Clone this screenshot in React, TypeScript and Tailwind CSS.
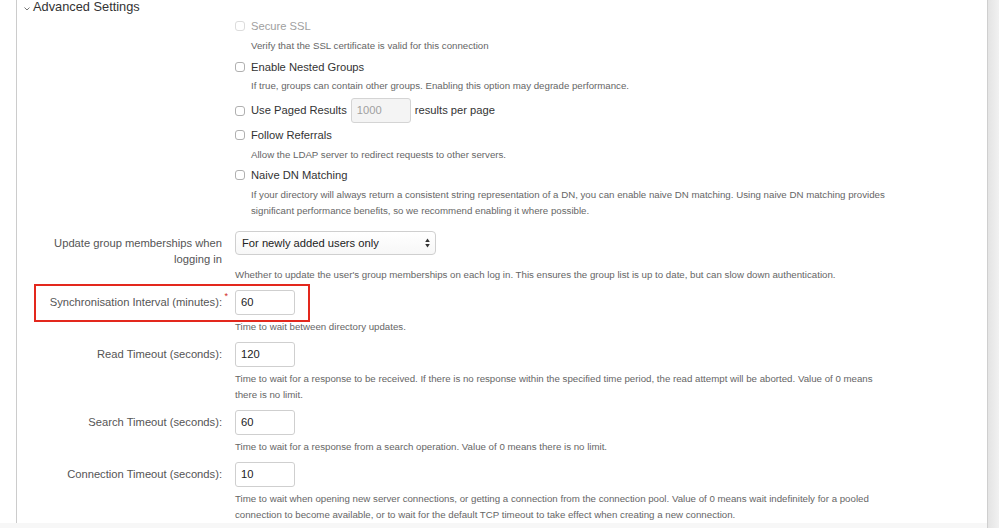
import type { ReactNode } from 'react'

const font = { fontFamily: '"Liberation Sans", Arial, sans-serif' }

function Checkbox({ disabled }: { disabled?: boolean }) {
  return (
    <span
      className={`inline-block w-[10px] h-[10px] rounded-[3px] border bg-white shrink-0 ${
        disabled ? 'border-[#dcdcdc]' : 'border-[#b0b0b0]'
      }`}
    />
  )
}

function Desc({ children, className = '' }: { children: ReactNode; className?: string }) {
  return <p className={`text-[9.7px] leading-[16px] text-[#666] whitespace-nowrap ${className}`}>{children}</p>
}

function TextBox({ value }: { value: string }) {
  return (
    <div className="w-[60px] h-[25px] border border-[#cfcfcf] rounded-[3px] bg-white flex items-center px-[5px] text-[11.2px] text-[#222]">
      {value}
    </div>
  )
}

function FieldRow({
  label,
  value,
  desc,
  required,
  className = '',
}: {
  label: string
  value: string
  desc: ReactNode
  required?: boolean
  className?: string
}) {
  return (
    <div className={`grid grid-cols-[205px_1fr] gap-x-[13px] ${className}`}>
      <div className="h-[25px] flex items-center justify-end text-[11.2px] text-[#555]">
        <span className="relative">
          {label}
          {required && <span className="absolute -right-[6px] -top-[4px] text-[9px] text-[#d0271d]">*</span>}
        </span>
      </div>
      <div>
        <TextBox value={value} />
        <Desc className="mt-[4px]">{desc}</Desc>
      </div>
    </div>
  )
}

export default function App() {
  return (
    <div className="w-[999px] h-[528px] overflow-hidden bg-white flex" style={font}>
      <div className="flex-1 flex flex-col">
        <div className="flex-1 flex pl-[16px]">
          <div className="flex-1 border-l border-[#cccccc] relative">
            {/* Section heading */}
            <div className="h-[14px] flex items-center pl-[7px] gap-[3px] text-[12.8px] leading-[14px] text-[#333]">
              <svg width="6" height="4" viewBox="0 0 6 4" className="mt-[3px]">
                <path d="M0.5 0.5 L3 3 L5.5 0.5" fill="none" stroke="#777" strokeWidth="1" />
              </svg>
              <span>Advanced Settings</span>
            </div>

            {/* Checkbox options */}
            <div className="ml-[218px] mt-[2px]">
              <div className="h-[20px] flex items-center gap-[6px] text-[11.2px] text-[#a0a0a0]">
                <Checkbox disabled />
                Secure SSL
              </div>
              <Desc className="mt-[2px] ml-[16px]">Verify that the SSL certificate is valid for this connection</Desc>

              <div className="mt-[3px] h-[20px] flex items-center gap-[6px] text-[11.2px] text-[#333]">
                <Checkbox />
                Enable Nested Groups
              </div>
              <Desc className="mt-[1px] ml-[16px]">
                If true, groups can contain other groups. Enabling this option may degrade performance.
              </Desc>

              <div className="mt-[4px] h-[25px] flex items-center gap-[6px] text-[11.2px] text-[#333]">
                <Checkbox />
                <span>Use Paged Results</span>
                <div className="-ml-[2px] w-[60px] h-[25px] border border-[#d4d4d4] rounded-[3px] bg-[#f4f4f4] flex items-center px-[5px] text-[#a0a0a0]">
                  1000
                </div>
                <span className="ml-[-2px]">results per page</span>
              </div>

              <div className="mt-[2px] h-[20px] flex items-center gap-[6px] text-[11.2px] text-[#333]">
                <Checkbox />
                Follow Referrals
              </div>
              <Desc className="mt-[2px] ml-[16px]">Allow the LDAP server to redirect requests to other servers.</Desc>

              <div className="mt-[2px] h-[20px] flex items-center gap-[6px] text-[11.2px] text-[#333]">
                <Checkbox />
                Naive DN Matching
              </div>
              <Desc className="mt-[2px] ml-[16px]">
                If your directory will always return a consistent string representation of a DN, you can enable naive DN
                matching. Using naive DN matching provides
                <br />
                significant performance benefits, so we recommend enabling it where possible.
              </Desc>
            </div>

            {/* Group membership select */}
            <div className="mt-[12px] grid grid-cols-[205px_1fr] gap-x-[13px]">
              <div className="pt-[4px] text-right text-[11.2px] leading-[16px] text-[#555]">
                Update group memberships when
                <br />
                logging in
              </div>
              <div>
                <div className="w-[201px] h-[24px] border border-[#cfcfcf] rounded-[4px] bg-gradient-to-b from-white to-[#f7f7f7] flex items-center justify-between pl-[6px] pr-[5px] text-[11.2px] text-[#222]">
                  <span>For newly added users only</span>
                  <svg width="5" height="10" viewBox="0 0 5 10">
                    <path d="M2.5 0.5 L4.8 4 L0.2 4 Z" fill="#333" />
                    <path d="M2.5 9.5 L4.8 6 L0.2 6 Z" fill="#333" />
                  </svg>
                </div>
                <Desc className="mt-[12px]">
                  Whether to update the user's group memberships on each log in. This ensures the group list is up to
                  date, but can slow down authentication.
                </Desc>
              </div>
            </div>

            {/* Numeric settings */}
            <div className="relative mt-[7px]">
              <div className="absolute left-[17px] -top-[6px] w-[276px] h-[38px] border-2 border-[#e3281d]" />
              <FieldRow
                label="Synchronisation Interval (minutes):"
                value="60"
                required
                desc="Time to wait between directory updates."
              />
            </div>

            <FieldRow
              className="mt-[7px]"
              label="Read Timeout (seconds):"
              value="120"
              desc={
                <>
                  Time to wait for a response to be received. If there is no response within the specified time period,
                  the read attempt will be aborted. Value of 0 means
                  <br />
                  there is no limit.
                </>
              }
            />

            <FieldRow
              className="mt-[7px]"
              label="Search Timeout (seconds):"
              value="60"
              desc="Time to wait for a response from a search operation. Value of 0 means there is no limit."
            />

            <FieldRow
              className="mt-[7px]"
              label="Connection Timeout (seconds):"
              value="10"
              desc={
                <>
                  Time to wait when opening new server connections, or getting a connection from the connection pool.
                  Value of 0 means wait indefinitely for a pooled
                  <br />
                  connection to become available, or to wait for the default TCP timeout to take effect when creating a
                  new connection.
                </>
              }
            />
          </div>
        </div>
        <div className="h-[5px] bg-[#f7f7f7]" />
      </div>
      <div className="w-[12px] border-l border-[#cfcfcf] bg-gradient-to-r from-[#e4e4e4] to-[#f1f1f1]" />
    </div>
  )
}
